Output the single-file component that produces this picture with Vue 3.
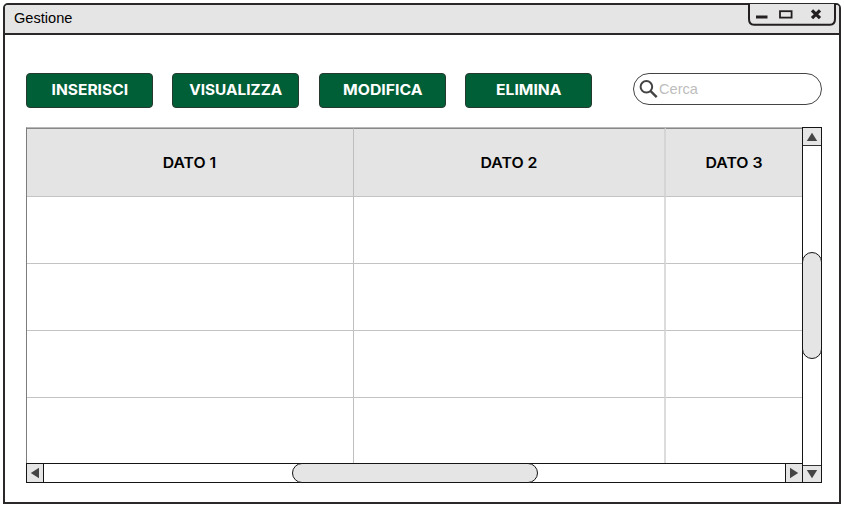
<script setup>
const actions = [
  { label: 'INSERISCI', width: 76.5 },
  { label: 'VISUALIZZA', width: 93 },
  { label: 'MODIFICA', width: 79.5 },
  { label: 'ELIMINA', width: 65.5 },
]
const columns = [
  { label: 'DATO 1', width: 53.5, shift: -0.5 },
  { label: 'DATO 2', width: 57, shift: 0 },
  { label: 'DATO 3', width: 57, shift: 0 },
]
const rows = 4
</script>

<template>
  <div class="window">
    <header class="titlebar">
      <span class="title">Gestione</span>
      <div class="controls">
        <svg width="90" height="22" viewBox="0 0 90 22">
          <path d="M2 0V15Q2 20.7 7 20.7H83Q88 20.7 88 15V0" fill="#e5e5e5" stroke="#231f20" stroke-width="2" />
          <path d="M9 13H20.5" stroke="#231f20" stroke-width="3" />
          <rect x="33" y="7.2" width="11.6" height="6.4" fill="none" stroke="#231f20" stroke-width="1.8" />
          <path d="M65 6.3L73 14.2M73 6.3L65 14.2" stroke="#231f20" stroke-width="3.2" />
        </svg>
      </div>
    </header>

    <main class="content">
      <div class="toolbar">
        <button v-for="a in actions" :key="a.label" class="action">
          <svg width="125" height="33" viewBox="0 0 125 33">
            <text x="62.8" y="21" text-anchor="middle" :textLength="a.width" lengthAdjust="spacingAndGlyphs">{{ a.label }}</text>
          </svg>
        </button>
        <label class="search">
          <svg width="20" height="20" viewBox="0 0 20 20" fill="none" stroke="#444">
            <circle cx="7.4" cy="7.8" r="5.8" stroke-width="2" />
            <path d="M11.4 11.9L17.7 18.2" stroke-width="2.4" />
          </svg>
          <span>Cerca</span>
        </label>
      </div>

      <section class="panel">
        <div class="table">
          <div v-for="c in columns" :key="c.label" class="cell head">
            <svg width="80" height="24" viewBox="0 0 80 24">
              <text :x="40 + c.shift" y="16.5" text-anchor="middle" :textLength="c.width" lengthAdjust="spacingAndGlyphs">{{ c.label }}</text>
            </svg>
          </div>
          <template v-for="r in rows" :key="r">
            <div v-for="c in columns" :key="c.label" class="cell"></div>
          </template>
        </div>

        <div class="vbar">
          <div class="arrow up"><svg width="12" height="10" viewBox="0 0 12 10"><path d="M6 .8L11.2 9H.8Z" /></svg></div>
          <div class="vtrack"><div class="vthumb"></div></div>
          <div class="arrow down"><svg width="12" height="10" viewBox="0 0 12 10"><path d="M.8 1H11.2L6 9.2Z" /></svg></div>
        </div>

        <div class="hbar">
          <div class="arrow left"><svg width="10" height="12" viewBox="0 0 10 12"><path d="M9 .8V11.2L.8 6Z" /></svg></div>
          <div class="htrack"><div class="hthumb"></div></div>
          <div class="arrow right"><svg width="10" height="12" viewBox="0 0 10 12"><path d="M1 .8V11.2L9.2 6Z" /></svg></div>
        </div>
      </section>
    </main>
  </div>
</template>

<style>
body {
  background: #fff;
}
</style>

<style scoped>
* {
  box-sizing: border-box;
}
svg {
  display: block;
}
.window {
  width: 838px;
  height: 501px;
  margin: 3px 0 0 3px;
  border: 2px solid #2b2829;
  border-radius: 5px 5px 0 0;
  font-family: "Liberation Sans", Arial, sans-serif;
  display: flow-root;
}
.titlebar {
  height: 30px;
  display: flex;
  justify-content: space-between;
  background: #e5e5e5;
  border-bottom: 2px solid #2b2829;
  border-radius: 3px 3px 0 0;
}
.title {
  padding-left: 9px;
  font-size: 14.6px;
  line-height: 26px;
  color: #000;
}
.controls {
  padding-right: 2px;
  margin-top: -1px;
}
.content {
  padding: 38px 17px 0 21px;
}
.toolbar {
  display: flex;
  gap: 19.3px;
  height: 35px;
}
.action {
  width: 127px;
  height: 35px;
  padding: 0;
  border: 1px solid #26392f;
  border-radius: 4px;
  background: #005f37;
}
.action text {
  fill: #fff;
  font: 700 14.4px "Inter", sans-serif;
}
.search {
  width: 189px;
  height: 32px;
  margin-left: auto;
  padding-left: 5px;
  display: flex;
  align-items: center;
  border: 1px solid #444;
  border-radius: 16px;
  color: #bdbdbd;
  font-size: 14.6px;
}
.search span {
  line-height: 30px;
}
.panel {
  width: 796px;
  margin-top: 19px;
  display: grid;
  grid-template-columns: 776px 20px;
  grid-template-rows: 336px 3px 18px;
}
.table {
  grid-column: 1;
  grid-row: 1;
  display: grid;
  grid-template-columns: 327px 312px 136px;
  grid-template-rows: 69px 67px 67px 67px 65px;
  border-top: 1px solid #b8b8b8;
  border-left: 1px solid #7d7d7d;
}
.cell {
  border-right: 1px solid #bfbfbf;
  border-bottom: 1px solid #c3c3c3;
}
.cell:nth-child(3n + 2) {
  border-right: 2px solid #dcdcdc;
}
.cell:nth-child(3n) {
  border-right: 0;
}
.cell:nth-last-child(-n + 3) {
  border-bottom: 0;
}
.head {
  display: flex;
  align-items: center;
  justify-content: center;
  background: #e4e4e4;
  border-top: 1px solid #888;
}
.head:nth-child(3n + 2) {
  border-right-color: #d5d5d5;
}
.head text {
  fill: #000;
  font: 600 14.4px "Inter", sans-serif;
}
.vbar {
  grid-column: 2;
  grid-row: 1 / 4;
  display: flex;
  flex-direction: column;
  height: 356px;
  border: 1px solid #151515;
}
.arrow {
  display: flex;
  align-items: center;
  justify-content: center;
  background: #e5e5e5;
  fill: #444;
  flex: none;
}
.up {
  height: 18px;
  border-bottom: 1px solid #333;
}
.down {
  height: 17px;
  border-top: 1px solid #333;
}
.vtrack {
  flex: 1;
  padding-top: 106px;
}
.vthumb {
  width: 20px;
  height: 107px;
  margin-left: -1px;
  border: 1px solid #151515;
  border-radius: 10px;
  background: #e5e5e5;
}
.hbar {
  grid-column: 1;
  grid-row: 2 / 4;
  display: flex;
  height: 20px;
  border: 1px solid #151515;
  border-right: 0;
}
.left {
  width: 17px;
  border-right: 1px solid #151515;
}
.right {
  width: 17px;
  border-left: 1px solid #151515;
}
.htrack {
  flex: 1;
  padding-left: 248px;
}
.hthumb {
  width: 246px;
  height: 20px;
  margin-top: -1px;
  border: 1px solid #151515;
  border-radius: 10px;
  background: #e5e5e5;
}
</style>
